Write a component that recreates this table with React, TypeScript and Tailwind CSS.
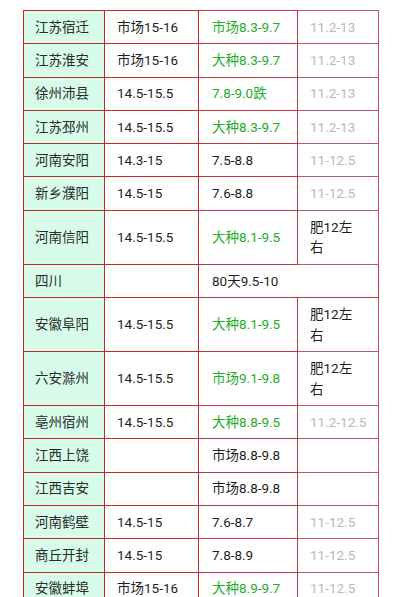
import React from "react";

type Cell = { t: string; c?: "g" | "k" | "x"; span?: number };
type Row = { name: string; p: string; cells: Cell[] };

const rows: Row[] = [
  { name: "江苏宿迁", p: "市场15-16", cells: [{ t: "市场8.3-9.7", c: "g" }, { t: "11.2-13", c: "x" }] },
  { name: "江苏淮安", p: "市场15-16", cells: [{ t: "大种8.3-9.7", c: "g" }, { t: "11.2-13", c: "x" }] },
  { name: "徐州沛县", p: "14.5-15.5", cells: [{ t: "7.8-9.0跌", c: "g" }, { t: "11.2-13", c: "x" }] },
  { name: "江苏邳州", p: "14.5-15.5", cells: [{ t: "大种8.3-9.7", c: "g" }, { t: "11.2-13", c: "x" }] },
  { name: "河南安阳", p: "14.3-15", cells: [{ t: "7.5-8.8", c: "k" }, { t: "11-12.5", c: "x" }] },
  { name: "新乡濮阳", p: "14.5-15", cells: [{ t: "7.6-8.8", c: "k" }, { t: "11-12.5", c: "x" }] },
  { name: "河南信阳", p: "14.5-15.5", cells: [{ t: "大种8.1-9.5", c: "g" }, { t: "肥12左右", c: "k" }] },
  { name: "四川", p: "", cells: [{ t: "80天9.5-10", c: "k", span: 2 }] },
  { name: "安徽阜阳", p: "14.5-15.5", cells: [{ t: "大种8.1-9.5", c: "g" }, { t: "肥12左右", c: "k" }] },
  { name: "六安滁州", p: "14.5-15.5", cells: [{ t: "市场9.1-9.8", c: "g" }, { t: "肥12左右", c: "k" }] },
  { name: "亳州宿州", p: "14.5-15.5", cells: [{ t: "大种8.8-9.5", c: "g" }, { t: "11.2-12.5", c: "x" }] },
  { name: "江西上饶", p: "", cells: [{ t: "市场8.8-9.8", c: "k" }, { t: "", c: "k" }] },
  { name: "江西吉安", p: "", cells: [{ t: "市场8.8-9.8", c: "k" }, { t: "", c: "k" }] },
  { name: "河南鹤壁", p: "14.5-15", cells: [{ t: "7.6-8.7", c: "k" }, { t: "11-12.5", c: "x" }] },
  { name: "商丘开封", p: "14.5-15", cells: [{ t: "7.8-8.9", c: "k" }, { t: "11-12.5", c: "x" }] },
  { name: "安徽蚌埠", p: "市场15-16", cells: [{ t: "大种8.9-9.7", c: "g" }, { t: "11-12.5", c: "x" }] },
];

const colorCls = (c?: string) =>
  c === "g" ? "text-[#23ab2a]" : c === "x" ? "text-[#b9b9b9]" : "text-[#1e1e1e]";

export default function App() {
  return (
    <div
      className="min-h-[597px] bg-white pt-[10px] pl-[23px]"
      style={{ fontFamily: 'Roboto, "Noto Sans CJK SC", sans-serif' }}
    >
      <table className="border-collapse text-[13.5px] leading-[20.7px] table-fixed w-[355px]">
        <colgroup>
          <col className="w-[81px]" />
          <col className="w-[94px]" />
          <col className="w-[99px]" />
          <col className="w-[81px]" />
        </colgroup>
        <tbody>
          {rows.map((r) => (
            <tr key={r.name}>
              <td className="border border-[#c02a2c] bg-[#d8fcea] px-[11px] py-[5.8px] align-middle text-[#2a2a2a]">
                {r.name}
              </td>
              <td className="border border-[#c02a2c] px-[12px] py-[5.8px] align-middle text-[#1e1e1e]">
                {r.p}
              </td>
              {r.cells.map((c, i) => (
                <td
                  key={i}
                  colSpan={c.span ?? 1}
                  className={`border ${i === 0 ? "border-[#bd3540]" : "border-[#b85a68]"} ${
                    i === 0 ? "px-[13px]" : "pl-[12px] pr-[4px]"
                  } py-[5.8px] align-middle whitespace-nowrap ${colorCls(c.c)}`}
                >
                  {c.t === "肥12左右" ? (
                    <>
                      肥12左
                      <br />
                      右
                    </>
                  ) : (
                    c.t
                  )}
                </td>
              ))}
            </tr>
          ))}
        </tbody>
      </table>
    </div>
  );
}
